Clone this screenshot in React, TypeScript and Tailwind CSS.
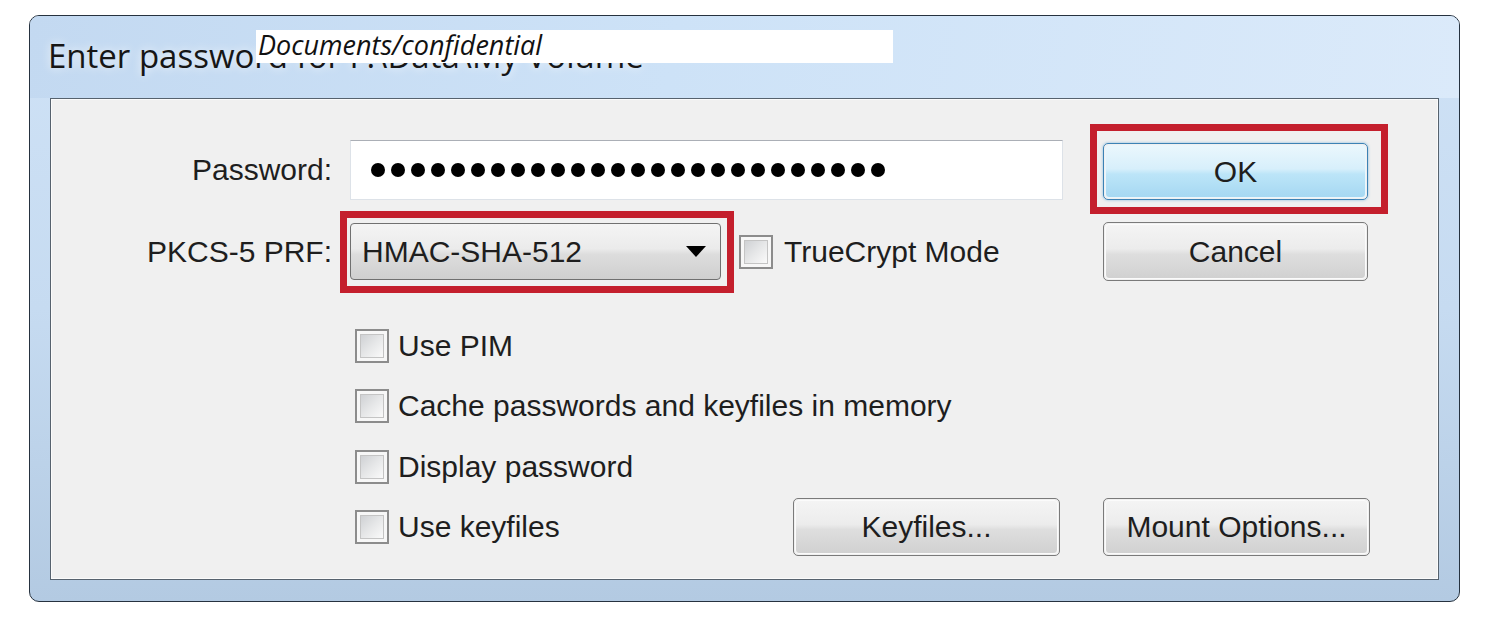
import React from 'react';

const Btn: React.FC<{ primary?: boolean; className?: string; children: React.ReactNode }> = ({
  primary,
  className,
  children,
}) => (
  <div
    className={`${className ?? ''} shrink-0 rounded-[5px] border p-px ${
      primary ? 'border-[#3c82b5] shadow-[0_0_3px_rgba(60,150,210,0.6)]' : 'border-[#7a7a7a]'
    }`}
  >
    <div
      className={`w-full h-full rounded-[4px] border flex items-center justify-center ${
        primary
          ? 'border-[#e9f6fd] bg-[linear-gradient(to_bottom,#eaf7fd_0%,#d7effb_45%,#bce5f8_55%,#a6d8f2_100%)]'
          : 'border-[#fbfbfb] bg-[linear-gradient(to_bottom,#f4f4f4_0%,#ececec_45%,#dedede_55%,#d1d1d1_100%)]'
      }`}
    >
      {children}
    </div>
  </div>
);

const Checkbox: React.FC = () => (
  <div className="w-[34px] h-[34px] shrink-0 border-2 border-[#8c8c8c] bg-[#f7f7f7] p-[3px]">
    <div className="w-full h-full border border-[#c4c4c4] bg-[linear-gradient(135deg,#cfd1d4_0%,#e6e7e8_50%,#fafafa_100%)]" />
  </div>
);

const CheckRow: React.FC<{ label: string; className?: string }> = ({ label, className }) => (
  <div className={`${className ?? ''} flex items-center h-[35px]`}>
    <Checkbox />
    <span className="ml-[9px]">{label}</span>
  </div>
);

const dots = Array.from({ length: 26 });

export default function App() {
  return (
    <div className="w-[1496px] h-[634px] bg-white pt-[15px] pl-[29px] font-['Liberation_Sans',Arial,sans-serif] text-[#1e1e1e]">
      <div className="relative w-[1431px] h-[587px] rounded-[10px] border border-[#26323f] bg-[linear-gradient(to_bottom,#cfe2f6_0%,#c6dbf1_50%,#b3cae2_100%)] flex flex-col overflow-hidden">
        {/* Title bar */}
        <div className="h-[82px] shrink-0 pl-[18px] pt-[23px] bg-[linear-gradient(100deg,#c3d9f1_0%,#cde2f7_45%,#dbeafa_100%)]">
          <div className="font-['Open_Sans',sans-serif] text-[33px] leading-none text-[#161616] whitespace-nowrap [text-shadow:0_0_10px_rgba(255,255,255,0.9)]">
            {'Enter password for F:\\Data\\My Volume'}
          </div>
        </div>

        {/* Redaction box over the title */}
        <div className="absolute left-[226px] top-[14px] w-[637px] h-[33px] bg-white pl-[2px] pt-px">
          <span className="font-['Open_Sans',sans-serif] italic text-[27px] leading-none text-[#111]">
            Documents/confidential
          </span>
        </div>

        {/* Dialog body */}
        <div className="mx-[20px] h-[482px] shrink-0 border border-[#56626e] bg-[#f0f0f0] shadow-[inset_0_0_0_1px_#fbfbfb] flex flex-col text-[30px] leading-none">
          {/* Password row */}
          <div className="flex items-start mt-[41px]">
            <div className="w-[281px] h-[60px] flex items-center justify-end">Password:</div>
            <div className="ml-[18px] w-[713px] h-[60px] bg-white border border-[#dde2e8] border-t-[#abafb6] flex items-center gap-[6px] pl-[20px]">
              {dots.map((_, i) => (
                <div key={i} className="w-[14px] h-[14px] rounded-full bg-black" />
              ))}
            </div>
            <div className="relative ml-[40px] mt-[3px]">
              <Btn primary className="w-[265px] h-[57px]">
                OK
              </Btn>
              <div className="absolute -left-[13px] -top-[19px] w-[298px] h-[90px] border-[7px] border-[#c41f2d]" />
            </div>
          </div>

          {/* PRF row */}
          <div className="flex items-start mt-[22px]">
            <div className="w-[281px] h-[59px] flex items-center justify-end">PKCS-5 PRF:</div>
            <div className="relative ml-[18px] mt-px">
              <div className="w-[371px] h-[57px] rounded-[4px] border border-[#707070] bg-[linear-gradient(to_bottom,#f4f4f4_0%,#ebebeb_45%,#dddddd_55%,#cfcfcf_100%)] flex items-center pl-[11px] pr-[14px]">
                <span>HMAC-SHA-512</span>
                <svg className="ml-auto" width="20" height="11" viewBox="0 0 20 11">
                  <path d="M0 0H20L10 11Z" fill="#000" />
                </svg>
              </div>
              <div className="absolute -left-[10px] -top-[12px] w-[394px] h-[82px] border-[7px] border-[#c41f2d]" />
            </div>
            <div className="ml-[18px] h-[59px] flex items-center">
              <Checkbox />
              <span className="ml-[11px]">TrueCrypt Mode</span>
            </div>
            <Btn className="ml-auto mr-[70px] w-[265px] h-[59px]">Cancel</Btn>
          </div>

          {/* Options */}
          <div className="flex flex-col pl-[304px]">
            <CheckRow className="mt-[47px]" label="Use PIM" />
            <CheckRow className="mt-[25px]" label="Cache passwords and keyfiles in memory" />
            <CheckRow className="mt-[26px]" label="Display password" />
            <div className="flex items-center mt-[14px] h-[58px]">
              <div className="w-[438px] flex items-center">
                <Checkbox />
                <span className="ml-[9px]">Use keyfiles</span>
              </div>
              <Btn className="w-[267px] h-[58px]">Keyfiles...</Btn>
              <Btn className="ml-[43px] w-[267px] h-[58px]">Mount Options...</Btn>
            </div>
          </div>
        </div>
      </div>
    </div>
  );
}
